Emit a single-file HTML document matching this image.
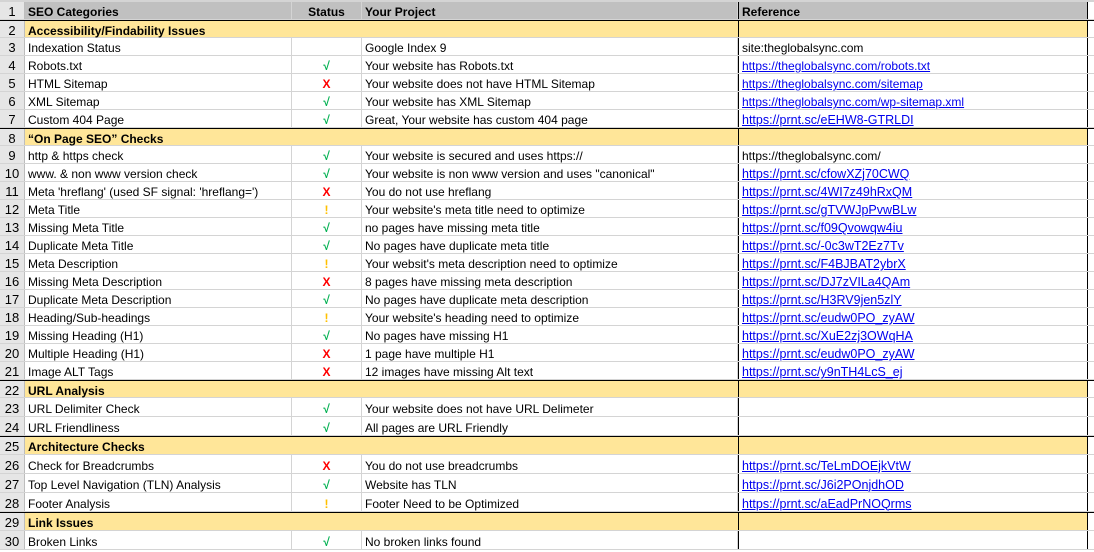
<!DOCTYPE html>
<html><head><meta charset="utf-8"><style>
body{margin:0;width:1094px;height:552px;overflow:hidden;background:#fff;font-family:"Liberation Sans",Arial,sans-serif;font-size:12px;color:#000}
.r{position:absolute;left:0;width:1094px;box-sizing:border-box;border-bottom:1px solid #d4d4d4}
.c{position:absolute;top:0;bottom:0;box-sizing:border-box;border-right:1px solid #d4d4d4;white-space:nowrap;overflow:visible;padding-left:3px;padding-top:3px;display:flex;align-items:center}
.n{left:0;width:25px;background:#e6e6e6;justify-content:center;padding:2px 0 0 0;font-size:13px;border-right:1px solid #bdbdbd}
.a{left:25px;width:267px}
.b{left:292px;width:70px;justify-content:center;padding:3px 0 0 0;font-weight:bold}
.cc{left:362px;width:376px}
.d{left:738px;width:350px;border-left:1px solid #000;border-right:1px solid #000}
.h .a,.h .b,.h .cc,.h .d{background:#c0c0c0;font-weight:bold}
.s{border-top:1px solid #000}
.s .a,.s .b,.s .cc,.s .d{background:#ffe699;border-right-color:#ffe699}
.s .a{font-weight:bold}
.s .d{border-right-color:#000}
a{color:#0000ee;text-decoration:underline}
.g{color:#00b050}.x{color:#ff0000}.o{color:#ffc000}
</style></head><body>
<div style="position:absolute;top:0;left:0;width:1094px;height:2px;background:#d4d4d4"></div>
<div id="t"></div>
<script>
(function(){
var rows=[
["h","SEO Categories","Status","Your Project","Reference"],
["s","Accessibility/Findability Issues"],
["","Indexation Status","","Google Index 9","site:theglobalsync.com"],
["","Robots.txt","g","Your website has Robots.txt","L:https://theglobalsync.com/robots.txt"],
["","HTML Sitemap","x","Your website does not have HTML Sitemap","L:https://theglobalsync.com/sitemap"],
["","XML Sitemap","g","Your website has XML Sitemap","L:https://theglobalsync.com/wp-sitemap.xml"],
["","Custom 404 Page","g","Great, Your website has custom 404 page","L:https://prnt.sc/eEHW8-GTRLDI"],
["s","“On Page  SEO” Checks"],
["","http & https check","g","Your website is secured and uses https://","https://theglobalsync.com/"],
["","www. & non www version check","g","Your website is non www version and uses \"canonical\"","L:https://prnt.sc/cfowXZj70CWQ"],
["","Meta 'hreflang' (used SF signal: 'hreflang=')","x","You do not use hreflang","L:https://prnt.sc/4WI7z49hRxQM"],
["","Meta Title","o","Your website's meta title need to optimize","L:https://prnt.sc/gTVWJpPvwBLw"],
["","Missing Meta Title","g","no pages have missing meta title","L:https://prnt.sc/f09Qvowqw4iu"],
["","Duplicate Meta Title","g","No pages have duplicate meta title","L:https://prnt.sc/-0c3wT2Ez7Tv"],
["","Meta Description","o","Your websit's meta description need to optimize","L:https://prnt.sc/F4BJBAT2ybrX"],
["","Missing Meta Description","x","8 pages have missing meta description","L:https://prnt.sc/DJ7zVILa4QAm"],
["","Duplicate Meta Description","g","No pages have duplicate meta description","L:https://prnt.sc/H3RV9jen5zlY"],
["","Heading/Sub-headings","o","Your website's heading need to optimize","L:https://prnt.sc/eudw0PO_zyAW"],
["","Missing Heading (H1)","g","No pages have missing H1","L:https://prnt.sc/XuE2zj3OWqHA"],
["","Multiple Heading (H1)","x","1 page have multiple H1","L:https://prnt.sc/eudw0PO_zyAW"],
["","Image ALT Tags","x","12 images have missing Alt text","L:https://prnt.sc/y9nTH4LcS_ej"],
["s","URL Analysis"],
["","URL Delimiter Check","g","Your website does not have URL Delimeter",""],
["","URL Friendliness","g","All pages are URL Friendly",""],
["s","Architecture Checks"],
["","Check for Breadcrumbs","x","You do not use breadcrumbs","L:https://prnt.sc/TeLmDOEjkVtW"],
["","Top Level Navigation (TLN) Analysis","g","Website has TLN","L:https://prnt.sc/J6i2POnjdhOD"],
["","Footer Analysis","o","Footer Need to be Optimized","L:https://prnt.sc/aEadPrNOQrms"],
["s","Link Issues"],
["","Broken Links","g","No broken links found",""]];
var sym={g:"√",x:"X",o:"!"},h="",y=2;
rows.forEach(function(r,i){var ht=i<22?18:19;
var st=r[2]||"",b=sym[st]?'<span class="'+st+'">'+sym[st]+'</span>':(r[0]=="h"?st:"");
var d=r[4]||"";if(d.indexOf("L:")==0){var u=d.slice(2);d='<a'+(u.indexOf("prnt")>0?' style="font-size:12.5px"':'')+'>'+u+'</a>';}
h+='<div class="r '+r[0]+'" style="top:'+y+'px;height:'+ht+'px"><div class="c n">'+(i+1)+'</div><div class="c a">'+r[1]+'</div><div class="c b">'+b+'</div><div class="c cc">'+(r[3]||"")+'</div><div class="c d">'+d+'</div></div>';
y+=ht;});
document.getElementById("t").innerHTML=h;
})();
</script>
</body></html>
